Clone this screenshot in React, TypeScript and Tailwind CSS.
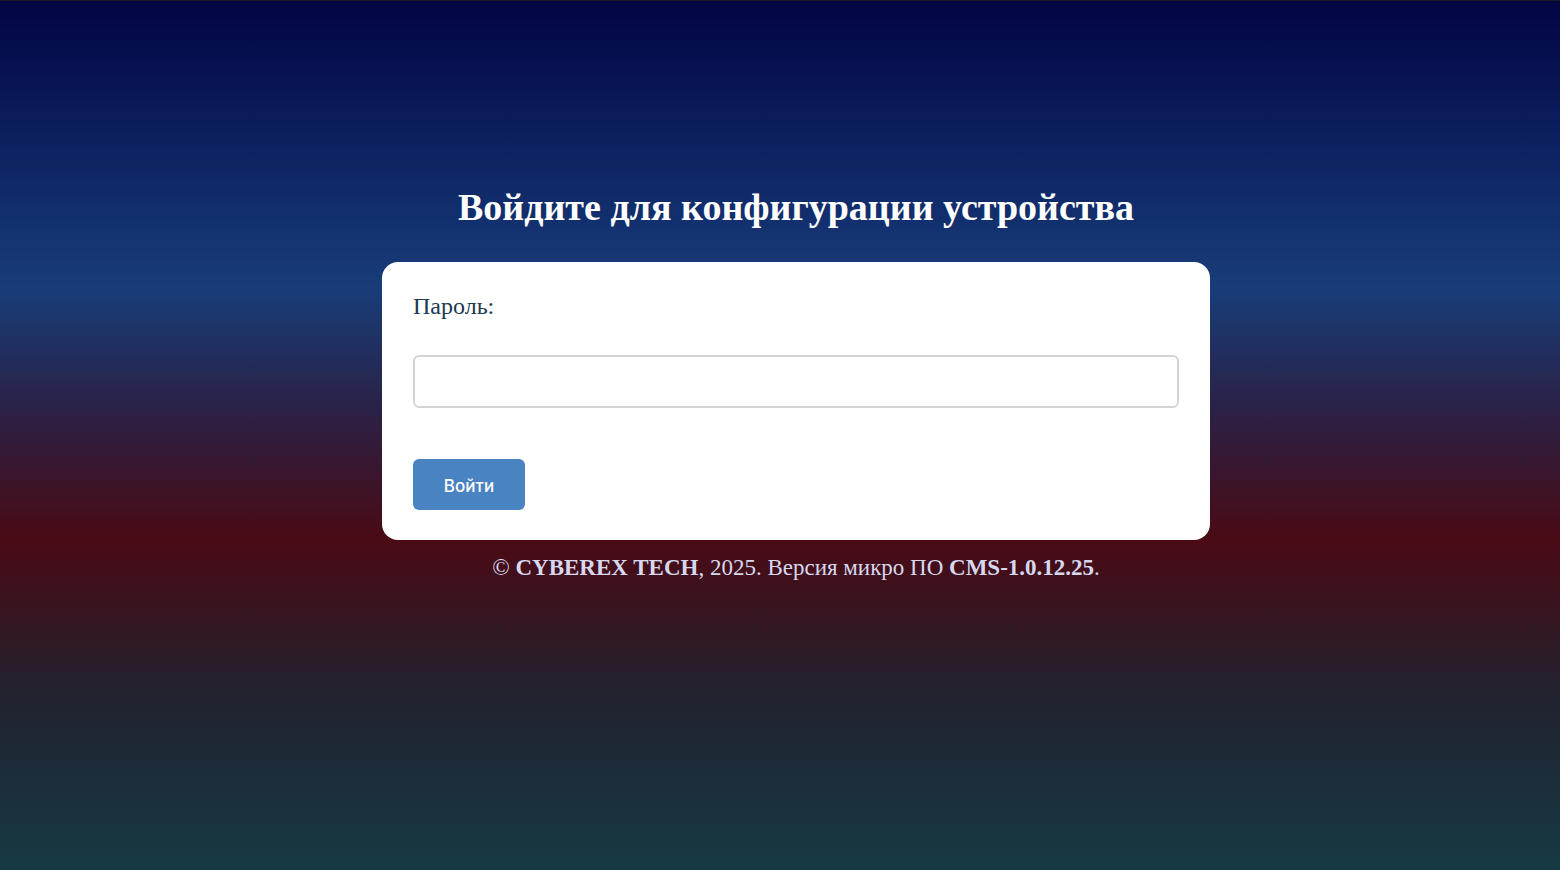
import React from 'react';

export default function App() {
  return (
    <div
      className="min-h-[870px] w-full border-t border-[#1a1a22] pl-8 bg-[linear-gradient(to_bottom,#030443_0%,#0c2060_16%,#183d79_33%,#2a2146_47%,#4a0a14_62%,#21222f_80%,#163a44_100%)]"
      style={{ fontFamily: '"Liberation Serif", "Times New Roman", serif' }}
    >
      <div className="flex flex-col items-center pt-[183px]">
        <h1 className="text-[38px] leading-[46px] font-bold text-white">
          Войдите для конфигурации устройства
        </h1>

        <form
          className="mt-8 w-[828px] rounded-2xl bg-white px-[31px] pt-[30px] pb-[30px]"
          onSubmit={(e) => e.preventDefault()}
        >
          <label htmlFor="password" className="block text-[24px] leading-[28px] text-[#1c3a50]">
            Пароль:
          </label>
          <input
            id="password"
            type="password"
            className="mt-[35px] block h-[53px] w-full rounded-md border-2 border-[#d4d4d4] px-3 text-lg outline-none"
          />
          <button
            type="submit"
            className="mt-[51px] h-[51px] w-[112px] rounded-md bg-[#4a83c1] pt-1 text-[17px] font-medium text-white"
            style={{ fontFamily: 'Inter, "Noto Sans", sans-serif' }}
          >
            Войти
          </button>
        </form>

        <p className="mt-[14px] text-[23px] leading-[28px] text-[#d6d8f0]">
          © <b>CYBEREX TECH</b>, 2025. Версия микро ПО <b>CMS-1.0.12.25</b>.
        </p>
      </div>
    </div>
  );
}
